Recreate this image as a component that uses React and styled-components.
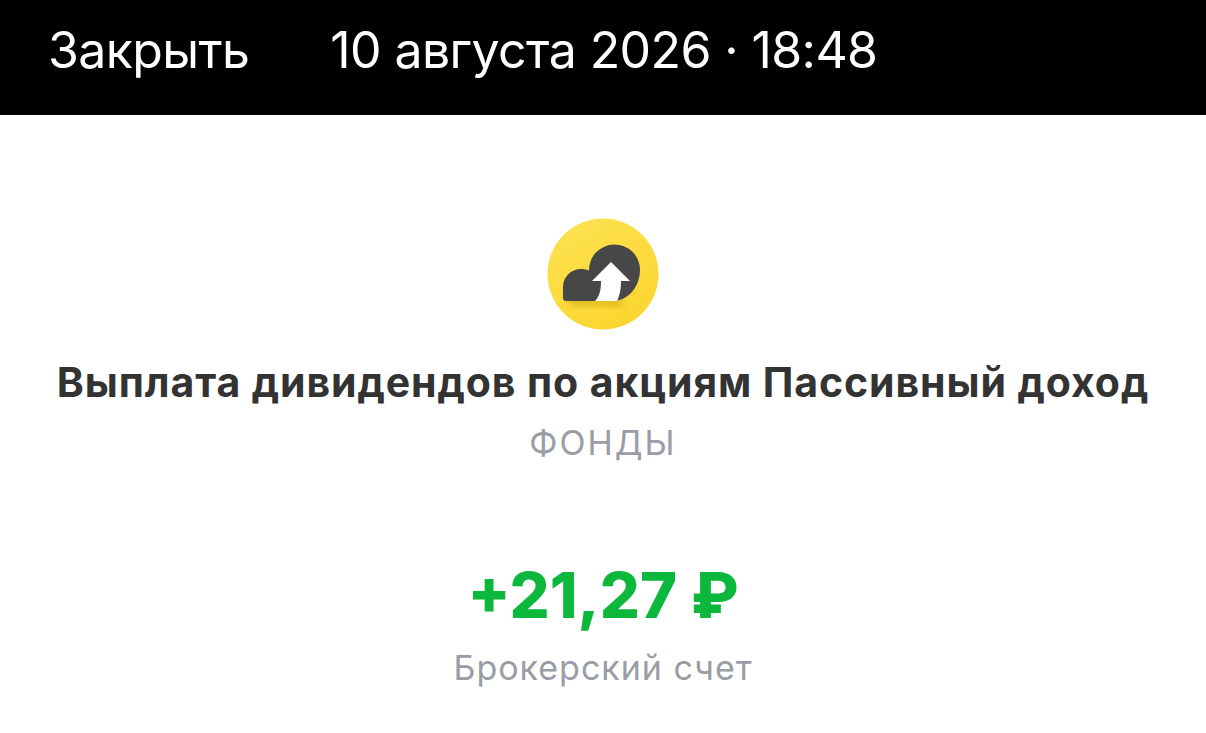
import React from "react";
import styled, { createGlobalStyle } from "styled-components";

const Global = createGlobalStyle`
  html, body { margin: 0; padding: 0; background: #fff; }
  body { font-family: Inter, "Noto Sans", sans-serif; }
`;

const Page = styled.div`
  width: 1206px;
  height: 733px;
  overflow: hidden;
  display: flex;
  flex-direction: column;
  background: #fff;
`;

const TopBar = styled.header`
  height: 115px;
  flex: none;
  box-sizing: border-box;
  padding: 0 0 16px 48px;
  display: flex;
  align-items: center;
  gap: 81px;
  background: #000;
  color: #fff;
  font-size: 50px;
  font-weight: 400;
  letter-spacing: -0.6px;
`;

const Content = styled.main`
  display: flex;
  flex-direction: column;
  align-items: center;
  padding-top: 103px;
`;

const Badge = styled.svg`
  width: 112px;
  height: 112px;
  display: block;
`;

const Title = styled.h1`
  margin: 26px 0 0;
  font-size: 41px;
  line-height: 52px;
  font-weight: 700;
  letter-spacing: 0.9px;
  color: #333333;
  white-space: nowrap;
`;

const Category = styled.div`
  margin-top: 13px;
  font-size: 34px;
  line-height: 44px;
  letter-spacing: 2px;
  color: #9a9da5;
`;

const Amount = styled.div`
  margin-top: 94px;
  font-size: 63px;
  line-height: 72px;
  font-weight: 800;
  color: #0cb83c;
`;

const Account = styled.div`
  margin-top: 15px;
  font-size: 34px;
  line-height: 44px;
  letter-spacing: 1px;
  color: #9a9da5;
`;

function FundBadge() {
  return (
    <Badge viewBox="0 0 112 112">
      <defs>
        <linearGradient id="coin" x1="0.2" y1="0" x2="0.8" y2="1">
          <stop offset="0" stopColor="#fde14f" />
          <stop offset="1" stopColor="#fad52e" />
        </linearGradient>
        <filter id="soft" x="-30%" y="-30%" width="160%" height="160%">
          <feGaussianBlur stdDeviation="3" />
        </filter>
      </defs>
      <circle cx="56" cy="56" r="55.500" fill="url(#coin)" />
      <path d="M18 80 H72 L78 88 H26 Z" fill="#b58f00" opacity="0.4" filter="url(#soft)" />
      {/* cloud: small lump on the left, round lump on the right */}
      <path
        d="M19 83 C17 83 16 82 16 80 V69 C16 59 24 51 34 51 C37 51 39.500 51.500 42 52.500 A25.500 25.500 0 0 1 93 51.500 C93 67 83 83 65 83 Z"
        fill="#474747"
      />
      <path
        d="M48 83 C52 79 54 73 54 63 H45 L64 44 L83 63 H74 C74 73 72 79 70 83 Z"
        fill="#fff"
      />
    </Badge>
  );
}

export default function App() {
  return (
    <Page>
      <Global />
      <TopBar>
        <span>Закрыть</span>
        <span>10 августа 2026 · 18:48</span>
      </TopBar>
      <Content>
        <FundBadge />
        <Title>Выплата дивидендов по акциям Пассивный доход</Title>
        <Category>ФОНДЫ</Category>
        <Amount>+21,27 ₽</Amount>
        <Account>Брокерский счет</Account>
      </Content>
    </Page>
  );
}
